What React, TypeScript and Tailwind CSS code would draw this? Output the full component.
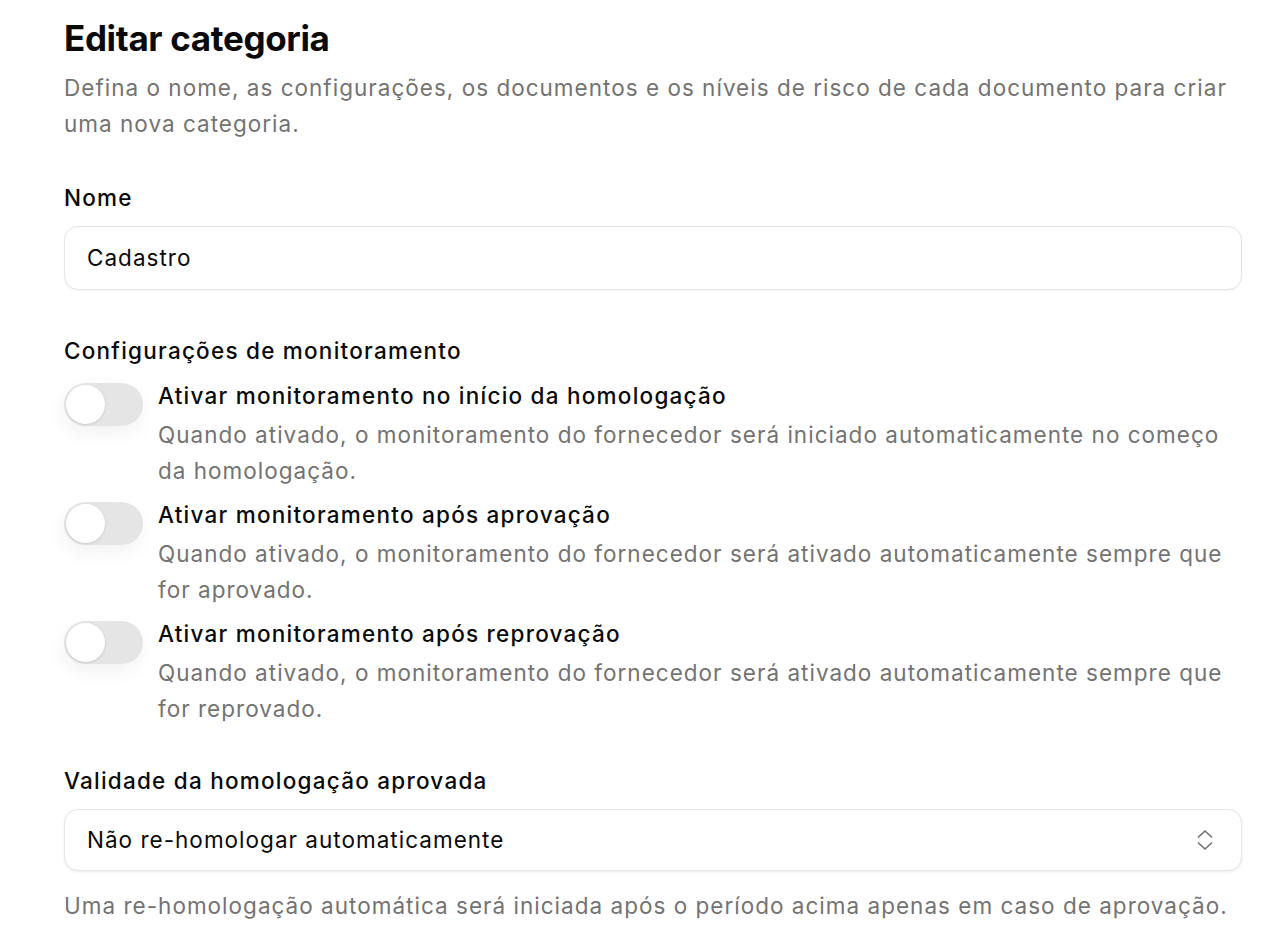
const toggles = [
  {
    title: "Ativar monitoramento no início da homologação",
    description:
      "Quando ativado, o monitoramento do fornecedor será iniciado automaticamente no começo da homologação.",
  },
  {
    title: "Ativar monitoramento após aprovação",
    description:
      "Quando ativado, o monitoramento do fornecedor será ativado automaticamente sempre que for aprovado.",
  },
  {
    title: "Ativar monitoramento após reprovação",
    description:
      "Quando ativado, o monitoramento do fornecedor será ativado automaticamente sempre que for reprovado.",
  },
];

function Toggle() {
  return (
    <button
      type="button"
      className="relative mt-[5px] flex h-[43px] w-[79px] shrink-0 items-center rounded-full bg-[#e5e5e5] p-[2px] shadow-[-2px_8px_18px_rgba(0,0,0,0.05)]"
    >
      <span className="block h-[39px] w-[39px] rounded-full bg-white shadow-[0_1px_3px_rgba(0,0,0,0.12)]" />
    </button>
  );
}

function UpDownIcon() {
  return (
    <svg width="16" height="22" viewBox="0 0 16 22" fill="none" stroke="#737373" strokeWidth="1.7" strokeLinecap="round" strokeLinejoin="round">
      <path d="M1.5 8 8 2l6.5 6" />
      <path d="M1.5 14 8 20l6.5-6" />
    </svg>
  );
}

export default function App() {
  return (
    <div className="min-h-screen bg-white font-['Inter',sans-serif] text-[#0a0a0a] text-[22.5px] tracking-[0.045em]">
      <div className="w-[1178px] ml-16 pt-[18px]">
        {/* Header */}
        <h1 className="text-[35px] font-bold leading-[40px] tracking-[-0.01em]">Editar categoria</h1>
        <p className="mt-3 leading-[36px] text-[#737373]">
          Defina o nome, as configurações, os documentos e os níveis de risco de cada documento para criar
          uma nova categoria.
        </p>

        {/* Nome */}
        <label className="mt-[41px] block font-medium leading-[30px] tracking-[0.055em]">Nome</label>
        <div className="mt-[13px] flex h-[64px] items-center rounded-[14px] border border-[#e5e5e5] bg-white px-[22px] shadow-[0_1px_2px_rgba(0,0,0,0.05)]">
          <span>Cadastro</span>
        </div>

        {/* Monitoramento */}
        <h2 className="mt-[46px] font-medium leading-[30px] tracking-[0.055em]">Configurações de monitoramento</h2>
        <div className="mt-3 flex flex-col gap-2">
          {toggles.map((t) => (
            <div key={t.title} className="flex items-start gap-[15px]">
              <Toggle />
              <div className="flex-1">
                <p className="font-medium leading-[36px] tracking-[0.055em]">{t.title}</p>
                <p className="mt-[3px] leading-[36px] text-[#737373]">{t.description}</p>
              </div>
            </div>
          ))}
        </div>

        {/* Validade */}
        <label className="mt-[39px] block font-medium leading-[30px] tracking-[0.055em]">
          Validade da homologação aprovada
        </label>
        <div className="mt-[13px] flex h-[62px] items-center justify-between rounded-[14px] border border-[#e5e5e5] bg-white pl-[22px] pr-[28px] shadow-[0_1px_3px_rgba(0,0,0,0.08)]">
          <span>Não re-homologar automaticamente</span>
          <UpDownIcon />
        </div>
        <p className="mt-5 leading-[30px] text-[#737373]">
          Uma re-homologação automática será iniciada após o período acima apenas em caso de aprovação.
        </p>
      </div>
    </div>
  );
}
